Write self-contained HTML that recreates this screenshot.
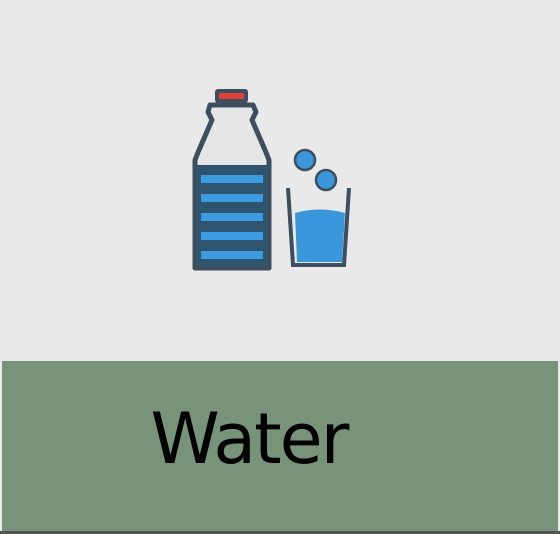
<!DOCTYPE html>
<html><head><style>
html,body{margin:0;padding:0;width:560px;height:534px;overflow:hidden;background:#e9e9e9}
.band{position:absolute;left:2px;top:361px;width:556px;height:170px;background:#77947b}
.bot{position:absolute;left:0;top:531px;width:560px;height:3px;background:#555}
.txt{position:absolute;left:0;width:498px;text-align:center;top:398px;font:70px "DejaVu Sans","Liberation Sans",sans-serif;letter-spacing:-2px;color:#000}
</style></head><body>
<svg width="560" height="360" style="position:absolute;left:0;top:0">
 <rect x="215" y="89" width="33" height="14" rx="3" fill="#3d4f5e"/>
 <rect x="219" y="93" width="25" height="6" fill="#e0403a"/>
 <path d="M210 105 H253 L256 112 L252 120 L265 150 L269 160 V268 H195 V160 L199 150 L212 120 L208 112 Z" fill="#e6e6e6" stroke="#3d4f5e" stroke-width="5" stroke-linejoin="round"/>
 <rect x="197" y="165" width="70" height="101" fill="#2e5570"/>
 <g fill="#3d9be0">
  <rect x="201" y="175" width="62" height="8"/>
  <rect x="201" y="194" width="62" height="8"/>
  <rect x="201" y="213" width="62" height="8"/>
  <rect x="201" y="232" width="62" height="8"/>
  <rect x="201" y="251" width="62" height="8"/>
 </g>
 <path d="M288 188 L293 265 H344 L349 188" fill="none" stroke="#3d4f5e" stroke-width="4"/>
 <path d="M295 213 Q320 206 345 213 L342 262 H297 Z" fill="#3b97dc"/>
 <circle cx="305" cy="160" r="10" fill="#3b97dc" stroke="#3d4f5e" stroke-width="2.5"/>
 <circle cx="326" cy="180" r="10" fill="#3b97dc" stroke="#3d4f5e" stroke-width="2.5"/>
</svg>
<div class="band"></div>
<div class="txt">Water</div>
<div class="bot"></div>
</body></html>
